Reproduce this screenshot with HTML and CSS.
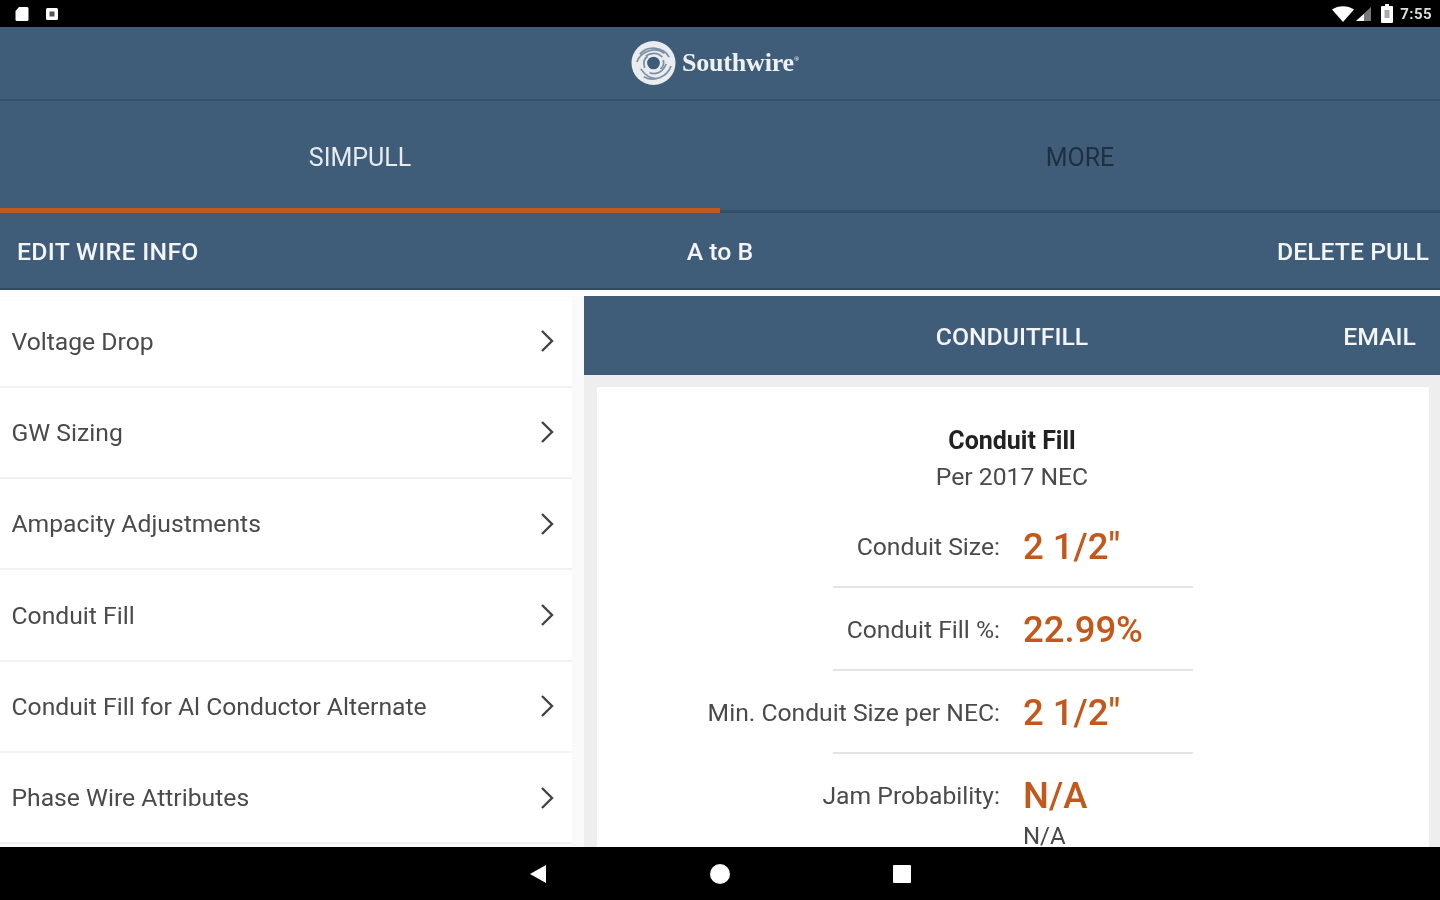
FILE: index.html
```html
<!DOCTYPE html>
<html lang="en">
<head>
    <meta charset="UTF-8">
    <meta name="viewport" content="width=device-width, initial-scale=1.0">
    <title>Southwire SIMPULL</title>
    <link rel="stylesheet" href="styles.css">
</head>
<body>
    <div class="status-bar">
        <div class="status-left">
            <svg width="16" height="16" viewBox="0 0 16 16"><path d="M5 1h8a1.500 1.500 0 0 1 1.500 1.500v11a1.500 1.500 0 0 1-1.500 1.500H3a1.500 1.500 0 0 1-1.500-1.500V5z" fill="#fff"/></svg>
            <svg width="14" height="14" viewBox="0 0 14 14"><rect x="1" y="1" width="12" height="12" rx="1.500" fill="#fff"/><rect x="4.500" y="4.500" width="5" height="5" fill="#555"/></svg>
        </div>
        <div class="status-right">
            <svg class="wifi" width="22" height="16" viewBox="0 0 22 16"><path d="M0 3.500C6 -1 16 -1 22 3.500L11 16z" fill="#fff"/></svg>
            <svg class="signal" width="16" height="16" viewBox="0 0 16 16"><path d="M16 1v14H1z" fill="#777"/><path d="M9 8v7H1z" fill="#fff"/></svg>
            <svg class="battery" width="12" height="19" viewBox="0 0 12 19"><path d="M4 0h4v2h3a1 1 0 0 1 1 1v15a1 1 0 0 1-1 1H1a1 1 0 0 1-1-1V3a1 1 0 0 1 1-1h3z" fill="#fff"/><rect x="3.500" y="6" width="5" height="8" fill="#aaa"/></svg>
            <span class="clock">7:55</span>
        </div>
    </div>

    <div class="app">
        <header class="brand">
            <svg class="brand-mark" width="45" height="46" viewBox="0 0 46 46">
                <circle cx="23" cy="23" r="22.500" fill="#e9edf0"/>
                <circle cx="23" cy="23" r="6.500" fill="#3f5d78"/>
                <path d="M9 14C17 5 33 6 39 17M6 22C10 11 25 6 34 13M13 37C24 43 37 37 41 26M19 33C27 36 33 31 36 24M10 29C14 35 19 39 27 39M15 16C20 12 28 12 32 17M14 28C12 22 14 18 17 16M30 29C33 27 34 24 33 20" fill="none" stroke="#7d91a4" stroke-width="1.800"/>
            </svg>
            <span class="brand-name">Southwire<sup>&reg;</sup></span>
        </header>

        <nav class="tabs">
            <div class="tab active">SIMPULL</div>
            <div class="tab">MORE</div>
        </nav>

        <div class="action-bar">
            <span class="action-edit">EDIT WIRE INFO</span>
            <span class="action-title">A to B</span>
            <span class="action-delete">DELETE PULL</span>
        </div>

        <main class="split">
            <ul class="menu">
                <li class="menu-row">Voltage Drop<svg class="chevron" width="16" height="24" viewBox="0 0 16 24"><path d="M3 2l10 10L3 22"/></svg></li>
                <li class="menu-row">GW Sizing<svg class="chevron" width="16" height="24" viewBox="0 0 16 24"><path d="M3 2l10 10L3 22"/></svg></li>
                <li class="menu-row">Ampacity Adjustments<svg class="chevron" width="16" height="24" viewBox="0 0 16 24"><path d="M3 2l10 10L3 22"/></svg></li>
                <li class="menu-row">Conduit Fill<svg class="chevron" width="16" height="24" viewBox="0 0 16 24"><path d="M3 2l10 10L3 22"/></svg></li>
                <li class="menu-row">Conduit Fill for Al Conductor Alternate<svg class="chevron" width="16" height="24" viewBox="0 0 16 24"><path d="M3 2l10 10L3 22"/></svg></li>
                <li class="menu-row">Phase Wire Attributes<svg class="chevron" width="16" height="24" viewBox="0 0 16 24"><path d="M3 2l10 10L3 22"/></svg></li>
            </ul>

            <section class="detail">
                <div class="detail-head">
                    <span class="detail-title">CONDUITFILL</span>
                    <span class="detail-email">EMAIL</span>
                </div>
                <div class="card">
                    <h2 class="card-title">Conduit Fill</h2>
                    <p class="card-sub">Per 2017 NEC</p>
                    <div class="result">
                        <div class="result-label"><span>Conduit Size:</span></div>
                        <span class="result-value">2 1/2"</span>
                    </div>
                    <div class="result">
                        <div class="result-label"><span>Conduit Fill %:</span></div>
                        <span class="result-value">22.99%</span>
                    </div>
                    <div class="result">
                        <div class="result-label"><span>Min. Conduit Size per NEC:</span></div>
                        <span class="result-value">2 1/2"</span>
                    </div>
                    <div class="result last">
                        <div class="result-label"><span>Jam Probability:</span></div>
                        <span class="result-value">N/A</span>
                    </div>
                    <div class="result-note">N/A</div>
                </div>
            </section>
        </main>
    </div>

    <div class="nav-bar">
        <svg width="18" height="20" viewBox="0 0 18 20"><path d="M17 1v18L1 10z" fill="#fff"/></svg>
        <svg width="20" height="20" viewBox="0 0 20 20"><circle cx="10" cy="10" r="10" fill="#fff"/></svg>
        <svg width="18" height="18" viewBox="0 0 18 18"><rect width="18" height="18" rx="1" fill="#fff"/></svg>
    </div>
</body>
</html>
```

FILE: styles.css
```css
* {
    box-sizing: border-box;
}
html, body {
    margin: 0;
    height: 900px;
    overflow: hidden;
}
body {
    display: flex;
    flex-direction: column;
    font-family: Roboto, "Liberation Sans", sans-serif;
    background: #000;
    filter: blur(0.7px);
}
.status-bar {
    height: 27px;
    flex: none;
    background: #000;
    display: flex;
    justify-content: space-between;
    align-items: center;
    padding: 0 8px 0 14px;
}
.status-left, .status-right {
    display: flex;
    align-items: center;
}
.status-left {
    gap: 15px;
}
.status-right {
    gap: 2px;
}
.wifi {
    margin-right: -1px;
}
.signal {
    margin-right: 8px;
}
.battery {
    margin-right: 5px;
}
.clock {
    color: #ddd;
    font-size: 15px;
    font-weight: 700;
    letter-spacing: 0.4px;
}
.app {
    flex: 1;
    min-height: 0;
    display: flex;
    flex-direction: column;
    background: #fff;
    overflow: hidden;
}
.brand {
    height: 74px;
    flex: none;
    background: #3f5d78;
    border-bottom: 2px solid #375069;
    display: flex;
    justify-content: center;
    align-items: center;
    gap: 6px;
    padding-right: 10px;
}
.brand-name {
    font-family: "Liberation Serif", serif;
    font-weight: 700;
    font-size: 26px;
    letter-spacing: -0.2px;
    color: #eef1f3;
}
.brand-name sup {
    font-size: 7px;
}
.tabs {
    height: 112px;
    flex: none;
    display: flex;
    background: #3f5d78;
    border-bottom: 3px solid #375069;
}
.tab {
    flex: 1;
    display: flex;
    align-items: center;
    justify-content: center;
    padding-top: 5px;
    font-size: 25px;
    color: #1f2f3e;
    margin-bottom: -3px;
    border-bottom: 5px solid transparent;
}
.tab.active {
    color: #e6ebef;
    border-bottom-color: #c4581a;
}
.action-bar {
    height: 77px;
    flex: none;
    background: #3f5d78;
    border-bottom: 2px solid #2f4a62;
    display: grid;
    grid-template-columns: 1fr auto 1fr;
    align-items: center;
    padding: 2px 11px 0;
    font-size: 24.800px;
    font-weight: 500;
    color: #f2f4f6;
}
.action-edit {
    margin-left: 6px;
    letter-spacing: 0.3px;
}
.action-delete {
    justify-self: end;
}
.split {
    flex: 1;
    min-height: 0;
    display: flex;
    padding-top: 6px;
    background: #fff;
}
.menu {
    width: 584px;
    flex: none;
    list-style: none;
    margin: 0;
    padding: 0.500px 12px 0 0;
    background: #fafafa;
}
.menu-row {
    height: 91.300px;
    display: flex;
    align-items: center;
    justify-content: space-between;
    padding: 0 17px 0 11.500px;
    font-size: 24.700px;
    color: #4a4a4a;
    background: #fff;
    border-bottom: 2px solid #f1f1f1;
}
.chevron {
    fill: none;
    stroke: #444;
    stroke-width: 2.400;
}
.detail {
    flex: 1;
    display: flex;
    flex-direction: column;
    background: #eeeeee;
    min-width: 0;
}
.detail-head {
    height: 79px;
    flex: none;
    background: #3f5d78;
    display: grid;
    grid-template-columns: 1fr auto 1fr;
    align-items: center;
    padding-top: 2px;
    font-size: 24.800px;
    font-weight: 500;
    color: #f2f4f6;
}
.detail-title {
    grid-column: 2;
}
.detail-email {
    justify-self: end;
    padding-right: 24px;
}
.card {
    flex: 1;
    margin: 12px 11px 0 13px;
    background: #fff;
    padding-top: 39px;
    display: flex;
    flex-direction: column;
    align-items: center;
}
.card-title {
    margin: 0;
    padding-right: 2px;
    font-size: 25px;
    line-height: 30px;
    font-weight: 700;
    color: #222;
}
.card-sub {
    margin: 6px 0 0;
    padding-right: 2px;
    font-size: 24.700px;
    line-height: 30px;
    color: #4a4a4a;
}
.result {
    width: 360px;
    height: 83px;
    flex: none;
    display: flex;
    align-items: center;
    padding-top: 2px;
    border-bottom: 2px solid #e4e4e4;
}
.card-sub + .result {
    margin-top: 13px;
}
.result-label {
    width: 167px;
    flex: none;
    display: flex;
    justify-content: flex-end;
    white-space: nowrap;
    font-size: 24.700px;
    color: #4a4a4a;
}
.result-value {
    margin-left: 23px;
    font-size: 36.500px;
    font-weight: 500;
    color: #c4581a;
}
.result.last {
    border-bottom: 0;
    height: 82px;
    padding-top: 0;
}
.result-note {
    width: 360px;
    padding-left: 190px;
    margin-top: -15px;
    font-size: 24px;
    line-height: 30px;
    color: #4a4a4a;
}
.nav-bar {
    height: 53px;
    flex: none;
    background: #000;
    display: flex;
    justify-content: center;
    align-items: center;
    gap: 163px;
}
```
